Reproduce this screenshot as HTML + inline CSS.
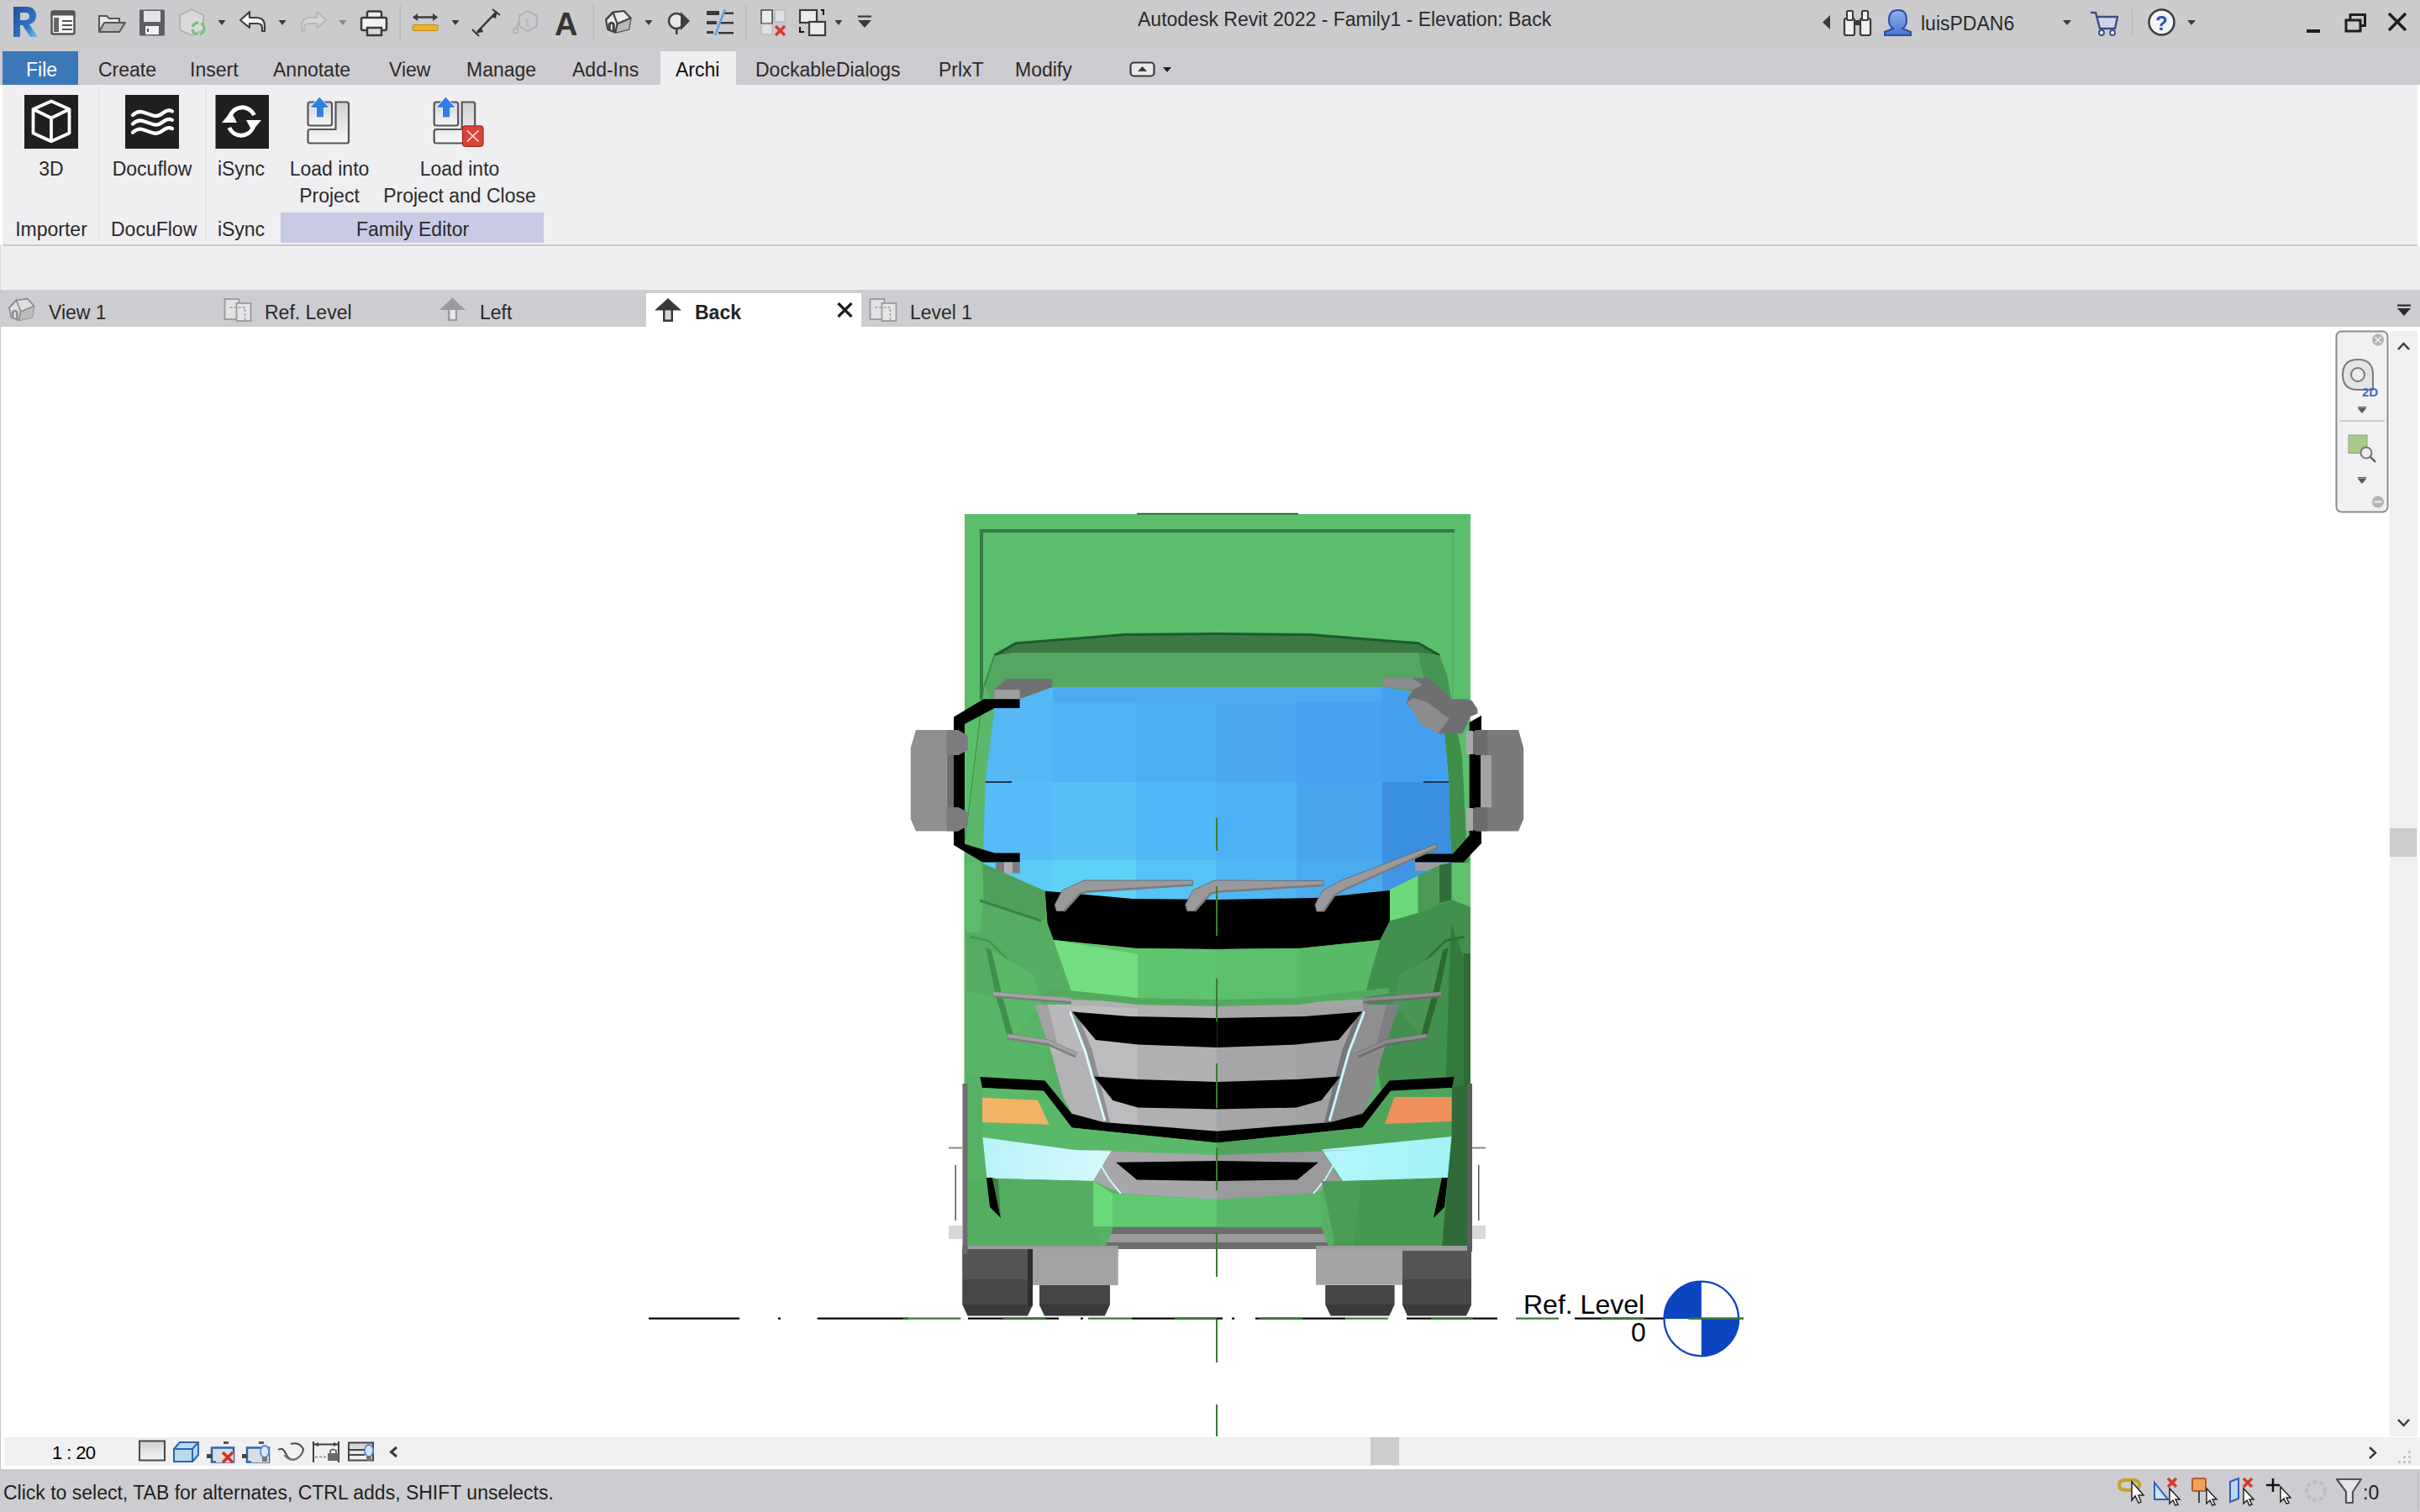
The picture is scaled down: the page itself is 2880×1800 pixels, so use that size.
<!DOCTYPE html>
<html><head><meta charset="utf-8">
<style>
html,body{margin:0;padding:0;width:2880px;height:1800px;overflow:hidden;background:#fff;}
body{position:relative;font-family:"Liberation Sans",sans-serif;color:#2a2a2a;}
.a{position:absolute;}
svg.a{overflow:visible;}
.t{position:absolute;white-space:nowrap;font-size:23px;line-height:23px;}
.c{text-align:center;}
#title{left:0;top:0;width:2880px;height:61px;background:#cbcbcd;}
#tabs{left:0;top:61px;width:2880px;height:40px;background:#cdcbcf;}
#ribbon{left:3px;top:101px;width:2874px;height:190px;background:#efeef1;border-bottom:2px solid #c9c8cb;}
#opts{left:1px;top:293px;width:2879px;height:52px;background:#efeef1;}
#vtabs{left:0;top:345px;width:2880px;height:44px;background:#cdccd0;}
#draw{left:0;top:389px;width:2880px;height:1322px;background:#fff;border-left:1px solid #c4c3c6;}
#hbar{left:5px;top:1711px;width:2875px;height:34px;background:#f0eff2;}
#status{left:0;top:1749px;width:2880px;height:51px;background:#cdccd0;}
</style></head><body>
<div class="a" id="title"></div>
<div class="a" id="tabs"></div>
<div class="a" id="ribbon"></div>
<div class="a" id="opts"></div>
<div class="a" style="left:0;top:291px;width:1px;height:54px;background:#d6d6d8;"></div>
<div class="a" id="vtabs"></div>
<div class="a" id="draw"></div>
<div class="a" id="hbar"></div>
<div class="a" style="left:0;top:1711px;width:1px;height:38px;background:#c4c3c6;"></div>
<div class="a" id="status"></div>

<!-- ===== title bar ===== -->
<div class="t" style="left:1354px;top:12px;">Autodesk Revit 2022 - Family1 - Elevation: Back</div>
<div class="t" style="left:2286px;top:17px;">luisPDAN6</div>

<!-- ===== ribbon tabs ===== -->
<div class="a" style="left:3px;top:61px;width:90px;height:40px;background:#3b78b8;"></div>
<div class="a" style="left:786px;top:61px;width:90px;height:40px;background:#efeef1;"></div>
<div class="t" style="left:31px;top:72px;color:#fff;">File</div>
<div class="t" style="left:117px;top:72px;">Create</div>
<div class="t" style="left:226px;top:72px;">Insert</div>
<div class="t" style="left:325px;top:72px;">Annotate</div>
<div class="t" style="left:463px;top:72px;">View</div>
<div class="t" style="left:555px;top:72px;">Manage</div>
<div class="t" style="left:681px;top:72px;">Add-Ins</div>
<div class="t" style="left:804px;top:72px;color:#111;">Archi</div>
<div class="t" style="left:899px;top:72px;">DockableDialogs</div>
<div class="t" style="left:1117px;top:72px;">PrlxT</div>
<div class="t" style="left:1208px;top:72px;">Modify</div>

<!-- ===== ribbon panel content ===== -->
<div class="a" style="left:117px;top:104px;width:1px;height:184px;background:#dcdbde;"></div>
<div class="a" style="left:245px;top:104px;width:1px;height:184px;background:#dcdbde;"></div>
<div class="a" style="left:334px;top:253px;width:313px;height:36px;background:#c8cbe3;"></div>
<div class="t c" style="left:11px;top:190px;width:100px;">3D</div>
<div class="t c" style="left:131px;top:190px;width:100px;">Docuflow</div>
<div class="t c" style="left:237px;top:190px;width:100px;">iSync</div>
<div class="t c" style="left:342px;top:190px;width:100px;">Load into</div>
<div class="t c" style="left:342px;top:222px;width:100px;">Project</div>
<div class="t c" style="left:447px;top:190px;width:200px;">Load into</div>
<div class="t c" style="left:447px;top:222px;width:200px;">Project and Close</div>
<div class="t c" style="left:11px;top:262px;width:100px;">Importer</div>
<div class="t c" style="left:132px;top:262px;width:100px;">DocuFlow</div>
<div class="t c" style="left:237px;top:262px;width:100px;">iSync</div>
<div class="t c" style="left:391px;top:262px;width:200px;">Family Editor</div>

<!-- ===== view tabs ===== -->
<div class="a" style="left:769px;top:349px;width:256px;height:40px;background:#fff;"></div>
<div class="t" style="left:58px;top:361px;">View 1</div>
<div class="t" style="left:315px;top:361px;">Ref. Level</div>
<div class="t" style="left:571px;top:361px;">Left</div>
<div class="t" style="left:827px;top:361px;font-weight:bold;color:#222;">Back</div>
<div class="t" style="left:1083px;top:361px;">Level 1</div>

<!-- ===== bottom ===== -->
<div class="t" style="left:62px;top:1718px;color:#000;font-size:22px;letter-spacing:-0.6px;">1 : 20</div>
<div class="a" style="left:1631px;top:1711px;width:34px;height:33px;background:#cdcbce;"></div>
<div class="t" style="left:4px;top:1766px;color:#1e1e1e;">Click to select, TAB for alternates, CTRL adds, SHIFT unselects.</div>
<div class="t" style="left:2812px;top:1766px;color:#1e1e1e;">:0</div>

<!-- vertical scrollbar -->
<div class="a" style="left:2844px;top:394px;width:33px;height:1316px;background:#f0eff2;"></div>
<div class="a" style="left:2844px;top:986px;width:32px;height:34px;background:#cdcbce;"></div>

<svg class="a" style="left:0;top:0;" width="2880" height="1800" viewBox="0 0 2880 1800"><rect x="1148" y="612" width="602" height="400" fill="#5bbe6c"/>
<rect x="1353" y="610.8" width="192" height="1.6" fill="#234f2c"/>
<polyline points="1729,634 1729,830" fill="none" stroke="#55b165" stroke-width="2"/>
<polyline points="1168,833 1168,632 1731,632" fill="none" stroke="#367b45" stroke-width="4"/>
<polygon points="1147.5,1000 1750,1000 1750,1486 1147.5,1486" fill="#56b165"/>
<polygon points="1183.5,780.4 1209,765.8 1338,755.5 1448.5,754.5 1559,755.5 1688,765.8 1713.5,780.4 1688,777 1209,777" fill="#3b7845"/>
<polyline points="1183.5,780.4 1209,765.8 1338,755.5 1448.5,754.5 1559,755.5 1688,765.8 1713.5,780.4" fill="none" stroke="#1f5a2a" stroke-width="3"/>
<polygon points="1183.5,780.4 1209,777 1688,777 1713.5,780.4 1722,804 1727,832 1681,824 1645.8,818 1252.3,818 1213.6,832 1171.5,832 1171.5,815.7" fill="#53a762"/>
<polygon points="1688,777 1713.5,780.4 1722,804 1727,832 1700,828 1690,790" fill="#479554"/>
<polyline points="1183.5,780.4 1171.5,815.7 1149,1000" fill="none" stroke="#3d8a48" stroke-width="2"/>
<polygon points="1171.5,815.7 1183.5,845 1173,929 1170.6,998 1170,1028 1149,1028 1149,1000" fill="#5ab868"/>
<polygon points="1727,832 1740,900 1745,1000 1748,1030 1727.6,1027 1726,998 1724,929 1719,874 1700,845" fill="#3f8f4a"/>
<defs><clipPath id="wclip"><polygon points="1183.5,845 1173,929 1170.6,998 1170,1028 1243.5,1060.7 1348,1070 1448.5,1071 1569.7,1068.8 1654,1060 1727.6,1027 1726,998 1724,929 1719,874 1681,824.3 1645.8,818 1252.3,818 1213.6,832 1183.5,843" fill="#000"/></clipPath></defs>
<polygon points="1183.5,845 1173,929 1170.6,998 1170,1028 1243.5,1060.7 1348,1070 1448.5,1071 1569.7,1068.8 1654,1060 1727.6,1027 1726,998 1724,929 1719,874 1681,824.3 1645.8,818 1252.3,818 1213.6,832 1183.5,843" fill="#4fb1f5"/>
<g clip-path="url(#wclip)"><rect x="1150" y="800" width="103" height="131" fill="#55b8f5"/><rect x="1253" y="800" width="99" height="131" fill="#4fb3f6"/><rect x="1352" y="800" width="95" height="131" fill="#4dadf4"/><rect x="1447" y="800" width="96" height="131" fill="#4aa8f2"/><rect x="1543" y="800" width="102" height="131" fill="#46a3f0"/><rect x="1645" y="800" width="115" height="131" fill="#43a0ef"/><rect x="1150" y="931" width="103" height="93" fill="#57bcf7"/><rect x="1253" y="931" width="99" height="93" fill="#56c0f7"/><rect x="1352" y="931" width="95" height="93" fill="#51b7f6"/><rect x="1447" y="931" width="96" height="93" fill="#4db0f4"/><rect x="1543" y="931" width="102" height="93" fill="#48a6f1"/><rect x="1645" y="931" width="115" height="93" fill="#3b8fe1"/><rect x="1150" y="1024" width="103" height="56" fill="#5bcbf7"/><rect x="1253" y="1024" width="99" height="56" fill="#5dd1f7"/><rect x="1352" y="1024" width="95" height="56" fill="#55c3f6"/><rect x="1447" y="1024" width="96" height="56" fill="#50b7f5"/><rect x="1543" y="1024" width="102" height="56" fill="#4aaaf2"/><rect x="1645" y="1024" width="115" height="56" fill="#3f95e4"/><rect x="1253" y="810" width="392" height="26" fill="#4caaf3"/></g>
<rect x="1173" y="930" width="31" height="2" fill="#1a3a55"/>
<rect x="1694" y="930" width="30" height="2" fill="#1a3a55"/>
<polygon points="1183.5,820.8 1198,808 1252.3,808 1252.3,818 1213.6,832 1183.5,832" fill="#717173"/>
<polygon points="1183.5,821 1213.6,821 1213.6,832 1183.5,832" fill="#9e9ea0"/>
<polygon points="1646,807.2 1699.9,807.2 1728,832.3 1745.8,832.3 1751.8,834.3 1758.4,844.2 1758.4,849.5 1749,853.5 1744.5,866 1740,873.3 1711.4,873.3 1673.7,837.6 1675.7,829.7 1682.3,821 1646,817.8" fill="#6f6e71"/>
<polygon points="1674.4,836.3 1682.3,831 1698.2,835.6 1724.7,856 1711.4,873.3 1690.3,862" fill="#8b8a8d"/>
<polygon points="1646,807.2 1680,807.2 1693,815 1682.3,821 1646,817.8" fill="#8c8b8e"/>
<polygon points="1135,853.5 1170.6,832.3 1213.6,832.3 1213.6,843 1183.5,843 1148,862 1148,1004.7 1183.8,1015.6 1213.7,1015.6 1213.7,1026.6 1169.3,1026.6 1135,1006" fill="#000"/>
<polygon points="1748.7,860 1763,851.8 1763,1004 1741.5,1026.6 1684,1026.6 1684,1016.4 1729,1016.4 1748.7,994.6" fill="#000"/>
<polygon points="1090,869 1140,869 1151.7,876 1151.7,893 1140,899 1126.7,899 1126.7,961 1140,961 1151.7,967 1151.7,983 1140,989.4 1090,989.4 1083.8,975 1083.8,890" fill="#8f8f91"/>
<rect x="1126.7" y="899" width="8.3" height="62" fill="#6e6e70"/>
<polygon points="1126.7,869 1140,869 1151.7,876 1151.7,893 1140,899 1126.7,899" fill="#7c7c7e"/>
<polygon points="1126.7,961 1140,961 1151.7,967 1151.7,983 1140,989.4 1126.7,989.4" fill="#7c7c7e"/>
<rect x="1185" y="1026.6" width="28.7" height="13" fill="#7c7c7e"/>
<rect x="1195" y="1026.6" width="10" height="13" fill="#b0b0b2"/>
<polygon points="1807,869 1757,869 1745.3,876 1745.3,893 1757,899 1770.3,899 1770.3,961 1757,961 1745.3,967 1745.3,983 1757,989.4 1807,989.4 1813.2,975 1813.2,890" fill="#7a797c"/>
<rect x="1762" y="899" width="13" height="62" fill="#a3a3a5"/>
<polygon points="1770.3,869 1757,869 1745.3,876 1745.3,893 1757,899 1770.3,899" fill="#6c6b6e"/>
<polygon points="1770.3,961 1757,961 1745.3,967 1745.3,983 1757,989.4 1770.3,989.4" fill="#6c6b6e"/>
<rect x="1745" y="870" width="8" height="28" fill="#a8a8aa"/>
<rect x="1745" y="962" width="8" height="27" fill="#a8a8aa"/>
<rect x="1684" y="1026.6" width="40" height="10" fill="#9d9d9f"/>
<polygon points="1243.5,1060.7 1348,1070 1448.5,1071 1569.7,1068.8 1654,1060 1654,1096.4 1642.5,1119 1546.4,1129 1448.5,1130 1348,1129 1253.7,1119 1246.4,1099" fill="#000"/>
<polygon points="1149,1028 1169.3,1028 1243.5,1060.7 1246.4,1099 1253.7,1119 1275.5,1181 1240,1195 1149,1180" fill="#55ac62"/>
<polygon points="1149,1026 1169.3,1026 1170.7,1071.7 1166,1110 1149,1110" fill="#5cbc6b"/>
<polygon points="1169.3,1028 1243.5,1060.7 1243.5,1095 1170.7,1071.7" fill="#4f9f5b"/>
<polyline points="1166,1072 1239,1096" fill="none" stroke="#3b7f45" stroke-width="3"/>
<polygon points="1253.7,1119 1354,1129 1448.5,1130 1448.5,1192 1354,1190 1275.5,1181" fill="#5fc46e"/>
<polygon points="1253.7,1119 1354,1136 1354,1190 1275.5,1181" fill="#72de81"/>
<polygon points="1448.5,1130 1546.4,1129 1642.5,1119 1625,1182 1546,1190 1448.5,1192" fill="#58b967"/>
<polygon points="1448.5,1130 1546.4,1129 1546.4,1190 1448.5,1192" fill="#5cbf6b"/>
<polygon points="1654,1059 1687.6,1042.6 1687.6,1087 1654,1096.4" fill="#6cd97b"/>
<polygon points="1687.6,1042.6 1713,1030 1727.6,1027 1727.6,1071 1687.6,1087" fill="#4b9b57"/>
<polygon points="1713,1030 1727.6,1027 1727.6,1071 1713,1075" fill="#2f6d3a"/>
<polygon points="1727.6,1027 1750,1027 1750,1160 1727.6,1160" fill="#5fc06d"/>
<polygon points="1642.5,1119 1654,1096.4 1687.6,1087 1727.6,1071 1750,1080 1750,1490 1700,1490 1660,1400 1625,1182" fill="#42904d"/>
<polygon points="1727,1100 1750,1160 1750,1490 1735,1490 1720,1300" fill="#337a3e"/>
<polygon points="1149,1180 1240,1195 1250,1290 1169,1282 1149,1280" fill="#58b466"/>
<polyline points="1154,1115 1177,1120 1213,1156 1222,1176" fill="none" stroke="#449b50" stroke-width="3"/>
<polyline points="1743,1115 1720,1120 1684,1156 1675,1176" fill="none" stroke="#2f6f3a" stroke-width="3"/>
<polygon points="1173,1128 1180,1131 1192,1182 1206,1232 1199,1234 1185,1185" fill="#3f8f4b"/>
<polygon points="1724,1128 1717,1131 1705,1182 1691,1232 1698,1234 1712,1185" fill="#2c6a36"/>
<polygon points="1180,1131 1230,1160 1240,1195 1206,1232 1192,1182" fill="#5ab867"/>
<polygon points="1717,1131 1667,1160 1657,1195 1691,1232 1705,1182" fill="#4a9656"/>
<polygon points="1742,1135 1750,1135 1750,1300 1742,1300" fill="#2d6b37"/>
<polygon points="1275,1190 1448.5,1197 1448.5,1347 1313.3,1336 1275.5,1325.7" fill="#b0afb2"/>
<polygon points="1622,1190 1448.5,1197 1448.5,1347 1583.7,1336 1621.5,1325.7" fill="#a6a5a8"/>
<polygon points="1275.5,1197 1354,1200 1354,1340 1313.3,1336 1275.5,1325.7" fill="#bcbbbe"/>
<polygon points="1621.5,1197 1543,1200 1543,1340 1583.7,1336 1621.5,1325.7" fill="#a2a1a4"/>
<polygon points="1244,1176 1354,1188 1448.5,1190 1543,1188 1653,1176 1653,1183 1543,1196 1448.5,1198 1354,1196 1244,1183" fill="#52aa5f"/>
<polygon points="1232,1196 1275,1196 1275,1204 1283,1225 1291,1251 1252,1256 1247,1241" fill="#b9b8bb"/>
<polygon points="1665,1196 1622,1196 1622,1204 1614,1225 1606,1251 1645,1256 1650,1241" fill="#8f8e91"/>
<polygon points="1232,1196 1247,1196 1258,1241 1247,1241" fill="#a3a2a5"/>
<polygon points="1665,1196 1650,1196 1639,1241 1650,1241" fill="#7f7e81"/>
<polygon points="1252,1256 1291,1251 1313,1336 1275.5,1325.7 1265,1305" fill="#b3b2b5"/>
<polygon points="1645,1256 1606,1251 1584,1336 1621.5,1325.7 1632,1305" fill="#8a898c"/>
<polygon points="1271,1204 1281,1204 1300,1251 1321,1336 1313,1336 1291,1251" fill="#8f8e91"/>
<polygon points="1626,1204 1616,1204 1597,1251 1576,1336 1584,1336 1606,1251" fill="#77767a"/>
<polyline points="1182,1184 1232,1188 1275,1191" fill="none" stroke="#7d7c7f" stroke-width="7"/>
<polyline points="1182,1183 1232,1187 1275,1190" fill="none" stroke="#a3a2a5" stroke-width="4"/>
<polyline points="1715,1184 1665,1188 1622,1191" fill="none" stroke="#6b6a6d" stroke-width="7"/>
<polyline points="1715,1183 1665,1187 1622,1190" fill="none" stroke="#8c8b8e" stroke-width="4"/>
<polyline points="1199,1234 1247,1241 1281,1256" fill="none" stroke="#7d7c7f" stroke-width="7"/>
<polyline points="1199,1233 1247,1240 1281,1255" fill="none" stroke="#a3a2a5" stroke-width="4"/>
<polyline points="1698,1234 1650,1241 1616,1256" fill="none" stroke="#6b6a6d" stroke-width="7"/>
<polyline points="1698,1233 1650,1240 1616,1255" fill="none" stroke="#8c8b8e" stroke-width="4"/>
<polygon points="1276,1204.6 1345,1210 1448.5,1212 1448.5,1247 1354,1243.5 1304,1238" fill="#000"/>
<polygon points="1621,1204.6 1552,1210 1448.5,1212 1448.5,1247 1543,1243.5 1593,1238" fill="#000"/>
<polygon points="1302,1281.5 1354,1285 1448.5,1288 1448.5,1320.4 1354,1318.5 1324.4,1310" fill="#000"/>
<polygon points="1595,1281.5 1543,1285 1448.5,1288 1448.5,1320.4 1543,1318.5 1572.6,1310" fill="#000"/>
<polyline points="1273.3,1204.2 1291.5,1251.5 1314.8,1334.4" fill="none" stroke="#d8fbff" stroke-width="3"/>
<polyline points="1623.7,1204.2 1605.5,1251.5 1582.2,1334.4" fill="none" stroke="#c9f6fb" stroke-width="3"/>
<polygon points="1166.4,1282 1243.5,1286.4 1275.5,1325.7 1313.3,1336 1448.5,1346.8 1448.5,1360.6 1275.5,1342.4 1242,1298.8 1169,1295" fill="#000"/>
<polygon points="1730.6,1282 1653.5,1286.4 1621.5,1325.7 1583.7,1336 1448.5,1346.8 1448.5,1360.6 1621.5,1342.4 1655,1298.8 1728,1295" fill="#000"/>
<polygon points="1169,1295 1242,1298.8 1275.5,1342.4 1448.5,1360.6 1448.5,1380 1280,1369 1169.5,1354" fill="#5ab968"/>
<polygon points="1728,1295 1655,1298.8 1621.5,1342.4 1448.5,1360.6 1448.5,1380 1617,1369 1727.5,1354" fill="#4ea45b"/>
<polygon points="1169,1306.8 1234.8,1309.7 1248.6,1338.8 1169,1335.9" fill="#f4b266"/>
<polygon points="1659.4,1306 1727.5,1306 1727.5,1335 1648,1338" fill="#f0905a"/>
<defs><linearGradient id="cyl" x1="0" x2="1"><stop offset="0" stop-color="#b8f3f8"/><stop offset="1" stop-color="#d6fafc"/></linearGradient><linearGradient id="cyr" x1="0" x2="1"><stop offset="0" stop-color="#b2f6fb"/><stop offset="1" stop-color="#a2f2f6"/></linearGradient></defs>
<polygon points="1169.5,1354 1280,1369 1323,1369.8 1301,1406 1174.4,1402.8" fill="url(#cyl)"/>
<polygon points="1573,1368.6 1727.5,1353 1723,1402 1598,1406" fill="url(#cyr)"/>
<polygon points="1280,1369 1448.5,1375 1448.5,1428 1334.8,1421 1301,1406 1323,1369.8" fill="#a7a6a9"/>
<polygon points="1617,1369 1448.5,1375 1448.5,1428 1562.2,1421 1596,1406 1574,1369.8" fill="#9a999c"/>
<polygon points="1328,1383.8 1448.5,1382 1448.5,1406 1353,1404.5" fill="#000"/>
<polygon points="1569,1383.8 1448.5,1382 1448.5,1406 1544,1404.5" fill="#000"/>
<polyline points="1301,1372 1320,1404 1334,1421" fill="none" stroke="#d0f8fb" stroke-width="2"/>
<polyline points="1596,1372 1577,1404 1563,1421" fill="none" stroke="#c0f4f8" stroke-width="2"/>
<polygon points="1301,1406 1324,1421 1324,1460 1301,1460" fill="#6ad97a"/>
<polygon points="1324,1421 1448.5,1428 1448.5,1460 1324,1460" fill="#60c870"/>
<polygon points="1573,1421 1448.5,1428 1448.5,1460 1573,1460" fill="#57b766"/>
<polygon points="1174.4,1402.8 1301,1406 1301,1460 1313,1486 1150,1486 1150,1402" fill="#55ad62"/>
<polygon points="1722.6,1402.8 1596,1406 1596,1460 1584,1486 1747,1486 1747,1402" fill="#46974f"/>
<polygon points="1174,1402 1181,1402 1191,1450 1178,1437" fill="#000"/>
<polygon points="1181,1402 1188,1404 1191,1450" fill="#3a7f45"/>
<polygon points="1723,1402 1716,1402 1706,1450 1719,1437" fill="#000"/>
<polygon points="1728,1295 1746,1290 1746,1486 1716,1486 1723,1402 1728,1353" fill="#2f6b38"/>
<polygon points="1573,1406 1620,1406 1610,1486 1590,1486" fill="#4a9c57"/>
<polygon points="1324.8,1461 1572.7,1461 1575.5,1469 1322,1469" fill="#6e6b70"/>
<polygon points="1322,1469 1575.5,1469 1579,1479 1318,1479" fill="#9a999b"/>
<polygon points="1318,1479 1579,1479 1584,1487 1313,1487" fill="#6b6b6c"/>
<rect x="1149.6" y="1483" width="181" height="7" fill="#9c9b9e"/>
<rect x="1566" y="1483" width="185" height="7" fill="#9c9b9e"/>
<rect x="1145.5" y="1290" width="6" height="200" fill="#6f6f71"/>
<rect x="1746" y="1290" width="6" height="200" fill="#5d5d5f"/>
<rect x="1229" y="1486" width="101.7" height="44" fill="#a3a2a5"/>
<rect x="1566" y="1486.7" width="103" height="43" fill="#a4a4a2"/>
<polygon points="1145.5,1487 1229,1487 1229,1553.6 1223,1566.6 1151.5,1566.6 1145.5,1553.6" fill="#3a393c"/><rect x="1145.5" y="1487" width="83.5" height="36.6" fill="#555457"/><rect x="1145.5" y="1523.6" width="83.5" height="29.4" fill="#48474a"/>
<rect x="1223" y="1487" width="6" height="68" fill="#2e2e30"/>
<polygon points="1237,1530 1320.8,1530 1320.8,1553.6 1314.8,1566.6 1243,1566.6 1237,1553.6" fill="#39383b"/><rect x="1237" y="1530" width="83.8" height="18" fill="#454447"/><rect x="1237" y="1548" width="83.8" height="5" fill="#454447"/>
<polygon points="1669,1489 1751,1489 1751,1553.6 1745,1566.6 1675,1566.6 1669,1553.6" fill="#3a393c"/><rect x="1669" y="1489" width="82" height="34.6" fill="#555457"/><rect x="1669" y="1523.6" width="82" height="29.4" fill="#48474a"/>
<polygon points="1577.5,1530 1659.4,1530 1659.4,1553.6 1653.4,1566.6 1583.5,1566.6 1577.5,1553.6" fill="#39383b"/><rect x="1577.5" y="1530" width="81.9" height="18" fill="#454447"/><rect x="1577.5" y="1548" width="81.9" height="5" fill="#454447"/>
<rect x="1145.5" y="1483" width="6" height="10" fill="#6a6a6c"/>
<rect x="1129" y="1365.5" width="16" height="2" fill="#8a8a8a"/>
<rect x="1136.5" y="1387" width="1.5" height="66" fill="#555"/>
<rect x="1129" y="1459" width="16" height="16" fill="#d8d8d8"/>
<rect x="1752" y="1365.5" width="16" height="2" fill="#8a8a8a"/>
<rect x="1759" y="1387" width="1.5" height="66" fill="#555"/>
<rect x="1752" y="1459" width="16" height="16" fill="#d8d8d8"/>
<polygon points="1264.1,1060 1290.2,1048 1419.6,1048.2 1419.6,1053.4 1294.6,1061.6 1285,1063.8 1266.4,1084.6 1257.4,1084.6 1255.2,1077.2" fill="#9a999c" stroke="#6e6d70" stroke-width="1"/>
<polyline points="1419.6,1053.4 1294.6,1061.6 1285,1063.8 1266.4,1084.6" fill="none" stroke="#7b7a7d" stroke-width="2.5"/>
<polygon points="1419.6,1060 1445.7,1048 1575,1048.6 1575,1054 1450.1,1061.6 1440.5,1063.8 1421.9,1084.6 1412.9,1084.6 1410.7,1077.2" fill="#9a999c" stroke="#6e6d70" stroke-width="1"/>
<polyline points="1575,1054 1450.1,1061.6 1440.5,1063.8 1421.9,1084.6" fill="none" stroke="#7b7a7d" stroke-width="2.5"/>
<polygon points="1574,1060 1599,1047 1709.4,1004.7 1709.4,1010 1602,1058 1588,1066 1575,1085 1567,1085 1565,1077" fill="#9a999c" stroke="#6e6d70" stroke-width="1"/>
<polyline points="1709.4,1010 1602,1058 1588,1066 1575,1085" fill="none" stroke="#7b7a7d" stroke-width="2.5"/>
<rect x="1447" y="974" width="2" height="39" fill="#3b7a34"/>
<rect x="1447" y="1055" width="2" height="59" fill="#3b7a34"/>
<rect x="1447" y="1165" width="2" height="51" fill="#3b7a34"/>
<rect x="1447" y="1266" width="2" height="53" fill="#3b7a34"/>
<rect x="1447" y="1366" width="2" height="51" fill="#3b7a34"/>
<rect x="1447" y="1469" width="2" height="51" fill="#3b7a34"/>
<rect x="1447" y="1570" width="2" height="52" fill="#3b7a34"/>
<rect x="1447" y="1672" width="2" height="38" fill="#3b7a34"/>
<rect x="772" y="1568.5" width="108" height="2.2" fill="#000"/>
<rect x="926" y="1568.5" width="3" height="2.2" fill="#000"/>
<rect x="972.6" y="1568.5" width="108.4" height="2.2" fill="#000"/>
<rect x="1152" y="1568.5" width="108" height="2.2" fill="#000"/>
<rect x="1286" y="1568.5" width="3" height="2.2" fill="#000"/>
<rect x="1347" y="1568.5" width="108" height="2.2" fill="#000"/>
<rect x="1466" y="1568.5" width="3" height="2.2" fill="#000"/>
<rect x="1494" y="1568.5" width="107" height="2.2" fill="#000"/>
<rect x="1674" y="1568.5" width="108" height="2.2" fill="#000"/>
<rect x="1874" y="1568.5" width="107" height="2.2" fill="#000"/>
<rect x="1074.7" y="1568.5" width="68.6" height="2.2" fill="#3a7a33"/>
<rect x="1194" y="1568.5" width="50.5" height="2.2" fill="#3a7a33"/>
<rect x="1295" y="1568.5" width="52" height="2.2" fill="#3a7a33"/>
<rect x="1397.8" y="1568.5" width="50.2" height="2.2" fill="#3a7a33"/>
<rect x="1499" y="1568.5" width="51" height="2.2" fill="#3a7a33"/>
<rect x="1601" y="1568.5" width="51" height="2.2" fill="#3a7a33"/>
<rect x="1703" y="1568.5" width="50" height="2.2" fill="#3a7a33"/>
<rect x="1804" y="1568.5" width="51" height="2.2" fill="#3a7a33"/>
<rect x="1906" y="1568.5" width="51" height="2.2" fill="#3a7a33"/>
<rect x="2009.5" y="1568.5" width="65.5" height="2.2" fill="#3a7a33"/>
<path d="M2024.8,1570 L1980.5,1570 A44.3,44.3 0 0 1 2024.8,1525.7 Z" fill="#0c45c2"/>
<path d="M2024.8,1570 L2069.1,1570 A44.3,44.3 0 0 1 2024.8,1614.3 Z" fill="#0c45c2"/>
<circle cx="2024.8" cy="1570" r="44.3" fill="none" stroke="#0c45c2" stroke-width="2.2"/>
<rect x="2009.5" y="1568.5" width="65.5" height="2.2" fill="#3a7a33"/></svg>
<div class="t" style="left:1813px;top:1537px;font-size:32px;line-height:32px;color:#000;">Ref. Level</div>
<div class="t" style="left:1941px;top:1570px;font-size:32px;line-height:32px;color:#000;">0</div>
<svg class="a" style="left:0;top:0;" width="2880" height="1800" viewBox="0 0 2880 1800"><defs><linearGradient id="rg" x1="0" y1="0" x2="1" y2="1"><stop offset="0" stop-color="#1d4f9a"/><stop offset="0.6" stop-color="#2f72c0"/><stop offset="1" stop-color="#6cc4ef"/></linearGradient></defs>
<path d="M16,8 L33,8 Q43,9 43,19 Q43,27 35,29 L45,44 L36,44 L27,30 L24,30 L24,44 L16,44 Z M24,15 L24,24 L31,24 Q35,23 35,19.5 Q35,15.5 31,15 Z" fill="url(#rg)"/>
<rect x="61.5" y="13.5" width="27" height="27" rx="2" fill="#fafafa" stroke="#555" stroke-width="2.5"/>
<rect x="61.5" y="13.5" width="27" height="5" fill="#555"/>
<rect x="64" y="21" width="6" height="17" fill="#666"/>
<rect x="74" y="24" width="12" height="2" fill="#555"/><rect x="74" y="29" width="12" height="2" fill="#555"/><rect x="74" y="34" width="12" height="2" fill="#555"/>
<path d="M118,37 L118,19 L127,19 L130,22 L142,22 L142,27" fill="#e8e8e8" stroke="#555" stroke-width="2"/>
<path d="M118,38 L124,27 L149,27 L142,38 Z" fill="#b8b8bc" stroke="#555" stroke-width="2" stroke-linejoin="round"/>
<rect x="166" y="11.5" width="30" height="31" rx="1.5" fill="#5d5d66"/>
<rect x="171" y="13" width="20" height="13" fill="#e4e4e6"/>
<rect x="173" y="31" width="16" height="10" fill="#f2f2f2"/><rect x="175" y="34" width="2" height="4" fill="#555"/>
<path d="M214,18 L228,11 L242,18 L242,36 L228,42 L214,36 Z" fill="#d9d9db" stroke="#b4b4b6" stroke-width="2"/>
<circle cx="236" cy="34" r="7" fill="none" stroke="#6fc47a" stroke-width="3" stroke-dasharray="9 3"/>
<polygon points="259.5,24 268.5,24 264,30" fill="#3c3c3c"/>
<path d="M297,14 L286,24 L297,33 L297,28 L306,28 Q312,28 312,33 L312,37 L315,37 L315,31 Q315,21 305,21 L297,21 Z" fill="#f4f4f4" stroke="#3e3e3e" stroke-width="2.2" stroke-linejoin="round"/>
<polygon points="331.5,24 340.5,24 336,30" fill="#3c3c3c"/>
<path d="M377,14 L388,24 L377,33 L377,28 L368,28 Q362,28 362,33 L362,37 L359,37 L359,31 Q359,21 369,21 L377,21 Z" fill="#d6d6d8" stroke="#b8b8ba" stroke-width="2.2" stroke-linejoin="round"/>
<polygon points="403.5,24 412.5,24 408,30" fill="#8a8a8a"/>
<rect x="437" y="13.5" width="17" height="8" rx="2" fill="#f0f0f0" stroke="#3a3a3a" stroke-width="2.5"/>
<rect x="430" y="21" width="30" height="15" rx="2" fill="#f2f2f2" stroke="#3a3a3a" stroke-width="2.5"/>
<rect x="437" y="33" width="17" height="9" fill="#d8d8dc" stroke="#3a3a3a" stroke-width="2.5"/>
<rect x="475.5" y="6" width="1.5" height="42" fill="#b9b8bb"/>
<path d="M492,20.5 L520,20.5" stroke="#3c3c3c" stroke-width="2.5"/><path d="M491,20.5 L497,16 L497,25 Z M521,20.5 L515,16 L515,25 Z" fill="#3c3c3c"/>
<rect x="491" y="29.5" width="30" height="7" rx="1.5" fill="#e8b42a" stroke="#c08a10" stroke-width="1"/>
<polygon points="537.5,24 546.5,24 542,30" fill="#3c3c3c"/>
<path d="M568,38 L590,15" stroke="#333" stroke-width="2.5"/><path d="M566,40 L573,33 L575,38 Z M592,13 L585,20 L590,22 Z" fill="#333"/>
<path d="M562,35 L570,43 M586,11 L595,18" stroke="#333" stroke-width="2"/>
<path d="M628,13 L639,19 L639,31 L628,37 L618,31 L618,19 Z" fill="none" stroke="#b0b0b2" stroke-width="2"/>
<path d="M617,26 L614,35" stroke="#b0b0b2" stroke-width="2"/><rect x="611" y="34" width="5" height="5" fill="none" stroke="#b0b0b2" stroke-width="1.5"/>
<text x="624" y="31" font-family="Liberation Sans" font-size="13" fill="#b0b0b2">1</text>
<text x="660" y="41.5" font-family="Liberation Sans" font-weight="bold" font-size="38" fill="#353535">A</text>
<rect x="705.5" y="6" width="1.5" height="42" fill="#b9b8bb"/>
<polygon points="721.1,23.5 729.4,14.7 742.5,13.0 750.6,21.6 748.2,34.7 732.3,38.7 723.2,34.7" fill="#eaeaea" stroke="#444" stroke-width="2.2" stroke-linejoin="round"/>
<polygon points="734.7,28.3 750.6,21.6 748.2,34.7 732.3,38.7" fill="#b8b8ba"/>
<polyline points="721.1,23.5 729.4,14.7 734.7,28.3 750.6,21.6" fill="none" stroke="#444" stroke-width="2.2" stroke-linejoin="round"/>
<polyline points="734.7,28.3 732.3,38.7" fill="none" stroke="#444" stroke-width="2.2"/>
<path d="M725.2,37.0 L725.2,29.0 Q727.7,25.5 730.3,29.0 L730.3,38.0" fill="none" stroke="#444" stroke-width="3.08"/>
<polygon points="767.5,24 776.5,24 772,30" fill="#3c3c3c"/>
<circle cx="805" cy="25" r="9" fill="#e8e8ea" stroke="#3e3e3e" stroke-width="2.5"/>
<path d="M810,14 L821,25 L810,36 Z" fill="#3e3e3e"/><rect x="804" y="33" width="2.5" height="8" fill="#3e3e3e"/>
<rect x="841" y="13" width="15" height="5" fill="#3a3a3a"/><rect x="841" y="25" width="12" height="4" fill="#3a3a3a"/><rect x="841" y="37" width="8" height="3" fill="#3a3a3a"/>
<rect x="860" y="14.5" width="13" height="2.5" fill="#3a3a3a"/><rect x="857" y="26" width="16" height="2.5" fill="#3a3a3a"/><rect x="855" y="38" width="18" height="2.5" fill="#3a3a3a"/>
<path d="M863,11 L851,42" stroke="#5aa0e8" stroke-width="2.5"/>
<rect x="887" y="6" width="1.5" height="42" fill="#b9b8bb"/>
<rect x="906" y="12" width="13" height="16" fill="#ececee" stroke="#444" stroke-width="1.5"/>
<rect x="922" y="12" width="12" height="14" fill="#e0e0e2" stroke="#bbb" stroke-width="1.5"/>
<rect x="906" y="29" width="13" height="12" fill="#e0e0e2" stroke="#bbb" stroke-width="1.5"/>
<path d="M923,31 L934,42 M934,31 L923,42" stroke="#d63a2e" stroke-width="3.5"/>
<rect x="952" y="12" width="20" height="15" fill="#ececee" stroke="#3a3a3a" stroke-width="2.2"/>
<rect x="963" y="26" width="19" height="16" fill="#ececee" stroke="#3a3a3a" stroke-width="2.2"/>
<path d="M952,32 L952,38 L957,38 M977,12 L980,12 L980,18" stroke="#111" stroke-width="2" fill="none"/>
<polygon points="993.5,24 1002.5,24 998,30" fill="#3c3c3c"/>
<rect x="1021" y="18.5" width="16" height="2.2" fill="#3a3a3a"/>
<polygon points="1021,24 1037,24 1029,33" fill="#3a3a3a"/>
<polygon points="2178,18 2178,35 2169,26.5" fill="#3c3c3c"/>
<rect x="2195" y="22" width="12" height="20" rx="2" fill="#f0f0f0" stroke="#3a3a3a" stroke-width="2.2"/>
<rect x="2214" y="22" width="12" height="20" rx="2" fill="#f0f0f0" stroke="#3a3a3a" stroke-width="2.2"/>
<rect x="2198" y="13" width="7" height="11" rx="1" fill="#f0f0f0" stroke="#3a3a3a" stroke-width="2"/>
<rect x="2216" y="13" width="7" height="11" rx="1" fill="#f0f0f0" stroke="#3a3a3a" stroke-width="2"/>
<rect x="2206" y="24" width="9" height="6" fill="#3a3a3a"/>
<defs><linearGradient id="ug" x1="0" y1="0" x2="0" y2="1"><stop offset="0" stop-color="#8fb1ee"/><stop offset="1" stop-color="#4a74d0"/></linearGradient></defs>
<path d="M2259,12 Q2269,12 2269,24 Q2269,31 2264,34 L2274,38 L2274,42 L2243,42 L2243,38 L2253,34 Q2248,31 2248,24 Q2248,12 2259,12 Z" fill="url(#ug)" stroke="#2a4fa6" stroke-width="2"/>
<polygon points="2455,24 2465,24 2460,30" fill="#3c3c3c"/>
<path d="M2488,15 L2494,15 L2499,34 L2517,34 L2520,20 L2496,20" fill="#cfd6ea" stroke="#3e4f86" stroke-width="2.5" stroke-linejoin="round"/>
<circle cx="2501" cy="39" r="3" fill="#fff" stroke="#3e4f86" stroke-width="2"/><circle cx="2514" cy="39" r="3" fill="#fff" stroke="#3e4f86" stroke-width="2"/>
<rect x="2537" y="10" width="1.2" height="34" fill="#b9b8bb"/>
<circle cx="2572.5" cy="26.5" r="15" fill="#f4f4f4" stroke="#3c3c3c" stroke-width="2.5"/>
<text x="2565" y="36" font-family="Liberation Sans" font-weight="bold" font-size="24" fill="#2554b8">?</text>
<polygon points="2603,24 2613,24 2608,30" fill="#3c3c3c"/>
<rect x="2745" y="35" width="16" height="4" fill="#1e1e1e"/>
<rect x="2797" y="17.5" width="17.5" height="13" fill="none" stroke="#1e1e1e" stroke-width="3"/>
<rect x="2792" y="24" width="17" height="13" fill="#cbcbcd" stroke="#1e1e1e" stroke-width="3"/>
<path d="M2843,16 L2863,36 M2863,16 L2843,36" stroke="#1e1e1e" stroke-width="3.5"/>
<rect x="1345.5" y="74.5" width="28" height="16" rx="4" fill="#e9e9ea" stroke="#3a3a3a" stroke-width="2.2"/>
<polygon points="1354,85 1365,85 1359.5,79" fill="#3a3a3a"/>
<polygon points="1384,80 1394,80 1389,86" fill="#1e1e1e"/>
<rect x="29" y="113" width="64" height="64" fill="#201f21"/>
<path d="M61,120.5 L82.5,130 L82.5,158.5 L61,168.2 L39.5,158.5 L39.5,130 Z M39.5,130 L61,140.5 L82.5,130 M61,140.5 L61,168" fill="none" stroke="#fff" stroke-width="3.8" stroke-linejoin="round"/>
<rect x="149" y="113" width="64" height="64" fill="#201f21"/>
<path d="M158,137 Q164,131.5 170,133.5 T182,137.5 T194,134.5 T205,132.5" fill="none" stroke="#fff" stroke-width="4.3" stroke-linecap="round"/>
<path d="M158,147.5 Q164,142 170,144 T182,148 T194,145 T205,143" fill="none" stroke="#fff" stroke-width="4.3" stroke-linecap="round"/>
<path d="M158,157.7 Q164,152.2 170,154.2 T182,158.2 T194,155.2 T205,153.2" fill="none" stroke="#fff" stroke-width="4.3" stroke-linecap="round"/>
<rect x="256.5" y="113" width="63.5" height="64" fill="#201f21"/>
<path d="M273.5,139 A15.5,15.5 0 0 1 302.5,137" fill="none" stroke="#fff" stroke-width="5"/>
<path d="M301.5,151 A15.5,15.5 0 0 1 272.8,152" fill="none" stroke="#fff" stroke-width="5"/>
<polygon points="264,146 275,133 282,146" fill="#fff"/>
<polygon points="311,143 300,156 293,143" fill="#fff"/>
<defs><linearGradient id="lg" x1="0" y1="0" x2="0" y2="1"><stop offset="0" stop-color="#d0d0d4"/><stop offset="1" stop-color="#f8f8fa"/></linearGradient></defs>
<path d="M399.5,121.5 L412.5,121.5 Q415,121.5 415,124 L415,168 Q415,170.5 412.5,170.5 L369,170.5 Q366.5,170.5 366.5,168 L366.5,157 Q366.5,154 369,154 L399.5,154 Z" fill="url(#lg)" stroke="#555" stroke-width="2.2"/>
<rect x="366.5" y="121.5" width="28.5" height="28" rx="2.5" fill="url(#lg)" stroke="#555" stroke-width="2.2"/>
<polygon points="380.2,115 368.5,128.5 376.3,128.5 376.3,140 385.7,140 385.7,128.5 392.5,128.5" fill="#2f80e2" stroke="#fff" stroke-width="1"/>
<path d="M549.7,121.5 L562.7,121.5 Q565.2,121.5 565.2,124 L565.2,168 Q565.2,170.5 562.7,170.5 L519.2,170.5 Q516.7,170.5 516.7,168 L516.7,157 Q516.7,154 519.2,154 L549.7,154 Z" fill="url(#lg)" stroke="#555" stroke-width="2.2"/>
<rect x="516.7" y="121.5" width="28.5" height="28" rx="2.5" fill="url(#lg)" stroke="#555" stroke-width="2.2"/>
<polygon points="530.4,115 518.7,128.5 526.5,128.5 526.5,140 535.9,140 535.9,128.5 542.7,128.5" fill="#2f80e2" stroke="#fff" stroke-width="1"/>
<rect x="550.5" y="149.8" width="24.5" height="24.5" rx="3.5" fill="#d8443a" stroke="#a8281e" stroke-width="1.2"/>
<path d="M556,155.5 L569.5,168.5 M569.5,155.5 L556,168.5" stroke="#ffe9e6" stroke-width="1.6"/>
<polygon points="11.1,366.2 19.4,357.4 32.5,355.7 40.6,364.3 38.2,377.4 22.3,381.4 13.2,377.4" fill="#dedee0" stroke="#8e8e90" stroke-width="1.8" stroke-linejoin="round"/>
<polygon points="24.7,371.0 40.6,364.3 38.2,377.4 22.3,381.4" fill="#bdbdbf"/>
<polyline points="11.1,366.2 19.4,357.4 24.7,371.0 40.6,364.3" fill="none" stroke="#8e8e90" stroke-width="1.8" stroke-linejoin="round"/>
<polyline points="24.7,371.0 22.3,381.4" fill="none" stroke="#8e8e90" stroke-width="1.8"/>
<path d="M15.2,379.7 L15.2,371.7 Q17.7,368.2 20.3,371.7 L20.3,380.7" fill="none" stroke="#8e8e90" stroke-width="2.52"/>
<rect x="267.5" y="356" width="17" height="24" fill="#e2e2e4" stroke="#9a9a9c" stroke-width="1.8"/>
<rect x="281.5" y="361" width="17" height="21" fill="#e6e6e8" stroke="#9a9a9c" stroke-width="1.8"/>
<path d="M273.5,366 L291.5,366 L291.5,382" fill="none" stroke="#9a9a9c" stroke-width="1.5" stroke-dasharray="3 2"/>
<rect x="1035.5" y="356" width="17" height="24" fill="#e2e2e4" stroke="#9a9a9c" stroke-width="1.8"/>
<rect x="1049.5" y="361" width="17" height="21" fill="#e6e6e8" stroke="#9a9a9c" stroke-width="1.8"/>
<path d="M1041.5,366 L1059.5,366 L1059.5,382" fill="none" stroke="#9a9a9c" stroke-width="1.5" stroke-dasharray="3 2"/>
<polygon points="538.5,354.5 554,369 544,369 544,382 533,382 533,369 523,369" fill="#9b9b9d"/>
<rect x="535.5" y="369" width="6.5" height="11" fill="#e8e8ea"/>
<polygon points="795,355 811,369.5 801,369.5 801,383 789,383 789,369.5 779,369.5" fill="#3a3a3d"/>
<rect x="791.5" y="369.5" width="7" height="11" fill="#d8d8dc"/>
<path d="M997.5,361 L1013.5,377 M1013.5,361 L997.5,377" stroke="#1e1e1e" stroke-width="3.2"/>
<rect x="2853" y="362.5" width="16" height="2.2" fill="#2a2a2a"/>
<polygon points="2853,367 2869,367 2861,376" fill="#2a2a2a"/>
<rect x="2780.5" y="394.5" width="61" height="215" rx="6" fill="#f1f0f2" stroke="#8c8c8e" stroke-width="2"/>
<circle cx="2830" cy="404.5" r="7" fill="#b4b4b6"/><path d="M2826.5,401 L2833.5,408 M2833.5,401 L2826.5,408" stroke="#f1f1f1" stroke-width="1.5"/>
<path d="M2824,446 Q2824,428 2806,428 Q2788,428 2788,446 Q2788,464 2806,464 L2824,464 Z" fill="#e4e4e6" stroke="#7a7a7c" stroke-width="2"/>
<circle cx="2806" cy="446" r="8" fill="#ececee" stroke="#7a7a7c" stroke-width="2"/>
<text x="2811" y="472" font-family="Liberation Sans" font-weight="bold" font-size="15" fill="#3a6fc0">2D</text>
<polygon points="2806,486 2816,486 2811,492" fill="#555"/><rect x="2806" y="484" width="10" height="1.5" fill="#555"/>
<rect x="2784" y="500.5" width="54" height="1.2" fill="#b5b5b7"/>
<rect x="2795" y="518" width="22" height="21.5" fill="#a8c98c" stroke="#8aa870" stroke-width="1"/>
<circle cx="2816" cy="539" r="6.5" fill="#eeeeee" stroke="#777" stroke-width="2"/><path d="M2821,544 L2827,550" stroke="#666" stroke-width="2.5"/>
<polygon points="2806,570 2816,570 2811,576" fill="#555"/><rect x="2806" y="568" width="10" height="1.5" fill="#555"/>
<circle cx="2830" cy="597.5" r="7" fill="#b4b4b6"/><rect x="2825.5" y="596.5" width="9" height="2" fill="#f1f1f1"/>
<path d="M2854,416 L2860.5,409 L2867,416" fill="none" stroke="#3a3a3a" stroke-width="2.5"/>
<path d="M2854,1690 L2860.5,1697 L2867,1690" fill="none" stroke="#3a3a3a" stroke-width="2.5"/>
<path d="M2820,1723 L2827,1729.5 L2820,1736" fill="none" stroke="#3a3a3a" stroke-width="2.5"/>
<path d="M472,1723 L465.5,1728.5 L472,1734" fill="none" stroke="#3a3a3a" stroke-width="3"/>
<rect x="2866" y="1727" width="3" height="3" fill="#c4c4c6"/>
<rect x="2860" y="1733" width="3" height="3" fill="#c4c4c6"/>
<rect x="2866" y="1733" width="3" height="3" fill="#c4c4c6"/>
<rect x="2854" y="1739" width="3" height="3" fill="#c4c4c6"/>
<rect x="2860" y="1739" width="3" height="3" fill="#c4c4c6"/>
<rect x="2866" y="1739" width="3" height="3" fill="#c4c4c6"/>
<defs><linearGradient id="vg" x1="0" y1="0" x2="0" y2="1"><stop offset="0" stop-color="#cfcfd2"/><stop offset="1" stop-color="#f6f6f8"/></linearGradient></defs>
<rect x="166" y="1715.5" width="30" height="23" fill="url(#vg)" stroke="#4a4a4a" stroke-width="2"/>
<path d="M207,1740 L207,1725 L214,1717 L236,1717 L236,1732 L229,1740 Z" fill="#b6daf0" stroke="#2e64a8" stroke-width="2" stroke-linejoin="round"/>
<path d="M207,1725 L229,1725 L236,1717 M229,1725 L229,1740" fill="none" stroke="#2e64a8" stroke-width="2"/>
<rect x="252" y="1723.5" width="26" height="17" fill="#d0e2f0" stroke="#2e64a8" stroke-width="2.5"/>
<rect x="257" y="1729" width="21" height="12" fill="#dcdcdf"/>
<rect x="266" y="1716" width="6" height="3" fill="#555"/>
<rect x="246" y="1731" width="6" height="5" fill="#444"/>
<rect x="294" y="1723.5" width="26" height="17" fill="#d0e2f0" stroke="#2e64a8" stroke-width="2.5"/>
<rect x="299" y="1729" width="21" height="12" fill="#dcdcdf"/>
<rect x="308" y="1716" width="6" height="3" fill="#555"/>
<rect x="288" y="1731" width="6" height="5" fill="#444"/>
<path d="M265,1729 L277,1741 M277,1729 L265,1741" stroke="#d62e22" stroke-width="3.5"/>
<ellipse cx="315" cy="1728" rx="5" ry="7" fill="#dbe8fb" stroke="#5b86d8" stroke-width="1.8"/><rect x="312" y="1734" width="6" height="6" fill="#777"/>
<path d="M331,1726 Q336,1722 340,1730 Q344,1740 352,1737 Q360,1733 361,1725 Q356,1716 346,1719" fill="none" stroke="#474747" stroke-width="2"/>
<path d="M338,1732 Q346,1742 356,1735" fill="none" stroke="#777" stroke-width="2"/>
<path d="M373,1716 L373,1741 M403,1716 L403,1741 M373,1719.5 L403,1719.5" fill="none" stroke="#3e3e3e" stroke-width="2"/>
<polygon points="374,1719.5 379,1717 379,1722" fill="#3e3e3e"/><polygon points="402,1719.5 397,1717 397,1722" fill="#3e3e3e"/>
<rect x="390" y="1730" width="13" height="9" rx="1" fill="#6a6a6c"/><path d="M393,1730 L393,1727 Q396.5,1724 400,1727 L400,1730" fill="none" stroke="#6a6a6c" stroke-width="1.8"/>
<path d="M375,1734.5 L390,1734.5" stroke="#999" stroke-dasharray="3 2" stroke-width="1.8"/>
<rect x="415" y="1717.5" width="29" height="21" fill="url(#vg)" stroke="#444" stroke-width="2"/>
<path d="M415,1726 L434,1726 M415,1732 L434,1732" stroke="#444" stroke-width="2"/>
<ellipse cx="439" cy="1727" rx="5" ry="7" fill="#dbe8fb" stroke="#5b86d8" stroke-width="1.8"/><rect x="436" y="1733" width="6" height="6" fill="#777"/>
<path d="M2522,1768 Q2522,1762 2530,1762 L2538,1762 Q2546,1762 2546,1768 Q2546,1774 2538,1774 L2530,1774 Q2522,1774 2522,1768 Z" fill="none" stroke="#c9a227" stroke-width="4"/>
<path d="M2537,1764 L2537,1786 L2541,1781 L2545,1789 L2548,1788 L2545,1780 L2551,1780 Z" fill="#fff" stroke="#222" stroke-width="1.5"/>
<path d="M2564,1765 L2564,1785 L2580,1785 Z" fill="#cfe4f4" stroke="#2e5fb8" stroke-width="2"/>
<path d="M2580,1760 L2590,1770 M2590,1760 L2580,1770" stroke="#d63a2e" stroke-width="3.5"/>
<path d="M2582,1772 L2582,1790 L2586,1786 L2589,1792 L2592,1791 L2589,1785 L2594,1785 Z" fill="#fff" stroke="#222" stroke-width="1.5"/>
<rect x="2609" y="1760" width="16" height="15" rx="2" fill="#f0a060" stroke="#b85c20" stroke-width="2"/>
<rect x="2616" y="1775" width="2" height="14" fill="#444"/>
<path d="M2626,1772 L2626,1790 L2630,1786 L2633,1792 L2636,1791 L2633,1785 L2638,1785 Z" fill="#fff" stroke="#222" stroke-width="1.5"/>
<path d="M2654,1764 L2664,1760 L2664,1784 L2654,1788 Z" fill="#bcd8f0" stroke="#2e5fb8" stroke-width="2"/>
<path d="M2670,1760 L2680,1770 M2680,1760 L2670,1770" stroke="#d63a2e" stroke-width="3.5"/>
<path d="M2670,1772 L2670,1790 L2674,1786 L2677,1792 L2680,1791 L2677,1785 L2682,1785 Z" fill="#fff" stroke="#222" stroke-width="1.5"/>
<path d="M2705,1760 L2705,1776 M2697,1768 L2713,1768" stroke="#111" stroke-width="2.5"/>
<path d="M2714,1770 L2714,1788 L2718,1784 L2721,1790 L2724,1789 L2721,1783 L2726,1783 Z" fill="#fff" stroke="#222" stroke-width="1.5"/>
<circle cx="2756" cy="1775" r="11" fill="none" stroke="#bdbdbf" stroke-width="4" stroke-dasharray="5 3"/>
<path d="M2781,1761 L2810,1761 L2800,1776 L2800,1789 L2792,1789 L2792,1776 Z" fill="#e6e6e8" stroke="#555" stroke-width="2.2" stroke-linejoin="round"/>
<rect x="2877" y="1752" width="1.5" height="46" fill="#bdbcbf"/></svg>
</body></html>
